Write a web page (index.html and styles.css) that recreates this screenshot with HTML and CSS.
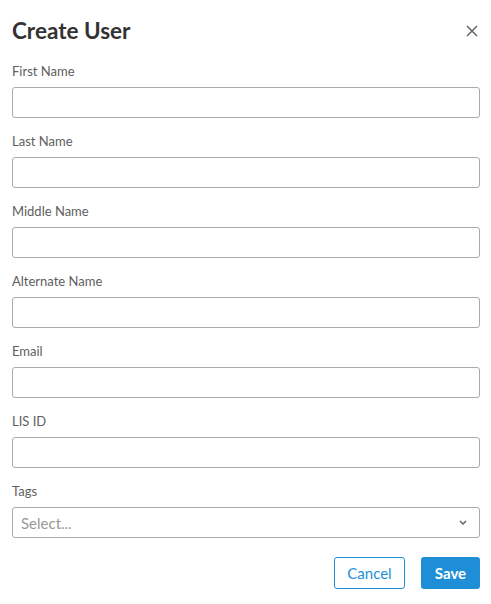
FILE: index.html
```html
<!DOCTYPE html>
<html lang="en">
<head>
    <meta charset="UTF-8">
    <meta name="viewport" content="width=device-width, initial-scale=1.0">
    <title>Create User</title>
    <link rel="stylesheet" href="styles.css">
</head>
<body>
    <div class="modal">
        <div class="modal-header">
            <h1>Create User</h1>
            <button class="close" type="button" aria-label="Close">
                <svg width="12" height="12" viewBox="0 0 12 12"><path d="M1 1L11 11M11 1L1 11" stroke="#666" stroke-width="1.5" fill="none"/></svg>
            </button>
        </div>
        <form class="user-form">
            <div class="field">
                <label for="firstName">First Name</label>
                <input type="text" id="firstName">
            </div>
            <div class="field">
                <label for="lastName">Last Name</label>
                <input type="text" id="lastName">
            </div>
            <div class="field">
                <label for="middleName">Middle Name</label>
                <input type="text" id="middleName">
            </div>
            <div class="field">
                <label for="alternateName">Alternate Name</label>
                <input type="text" id="alternateName">
            </div>
            <div class="field">
                <label for="email">Email</label>
                <input type="text" id="email">
            </div>
            <div class="field">
                <label for="lisId">LIS ID</label>
                <input type="text" id="lisId">
            </div>
            <div class="field">
                <label for="tags">Tags</label>
                <div class="select" id="tags">
                    <span class="placeholder">Select...</span>
                    <svg width="8" height="5" viewBox="0 0 8 5"><path d="M1 1L4 4L7 1" stroke="#666" stroke-width="1.5" fill="none"/></svg>
                </div>
            </div>
            <div class="actions">
                <button type="button" class="btn btn-outline">Cancel</button>
                <button type="submit" class="btn btn-primary">Save</button>
            </div>
        </form>
    </div>
</body>
</html>
```

FILE: styles.css
```css
body {
    font-family: Lato, 'Open Sans', sans-serif;
    background-color: #fff;
    color: #333;
    margin: 0;
    padding: 0;
}
.modal {
    padding: 16px 11px 0 12px;
}
.modal-header {
    display: flex;
    justify-content: space-between;
    align-items: center;
    height: 29px;
    margin-bottom: 18px;
}
h1 {
    margin: 0;
    font-size: 22.5px;
    line-height: 29px;
    font-weight: 700;
    color: #333;
}
.close {
    background: none;
    border: none;
    padding: 0;
    margin-right: 2px;
    width: 12px;
    height: 12px;
    display: flex;
    cursor: pointer;
}
.field {
    margin-bottom: 15px;
}
label {
    display: block;
    font-size: 13px;
    line-height: 16px;
    color: #5e5e5e;
    margin-bottom: 8px;
}
input, .select {
    display: block;
    width: 100%;
    height: 31px;
    margin: 0;
    padding: 0 8px;
    border: 1px solid #aaa;
    border-radius: 3px;
    box-sizing: border-box;
    font-family: inherit;
    font-size: 14px;
}
.select {
    display: flex;
    align-items: center;
    justify-content: space-between;
    padding-right: 12px;
}
.placeholder {
    color: #999;
    font-size: 15px;
}
.actions {
    display: flex;
    justify-content: flex-end;
    gap: 16px;
    margin-top: 19px;
}
.btn {
    height: 32px;
    border-radius: 3px;
    font-family: inherit;
    font-size: 15px;
    padding: 0;
    cursor: pointer;
    box-sizing: border-box;
}
.btn-outline {
    width: 71px;
    background: #fff;
    color: #1e8fd6;
    border: 1px solid #1e8fd6;
}
.btn-primary {
    width: 59px;
    background: #1e8fd6;
    color: #fff;
    border: none;
    font-weight: 700;
}
```
